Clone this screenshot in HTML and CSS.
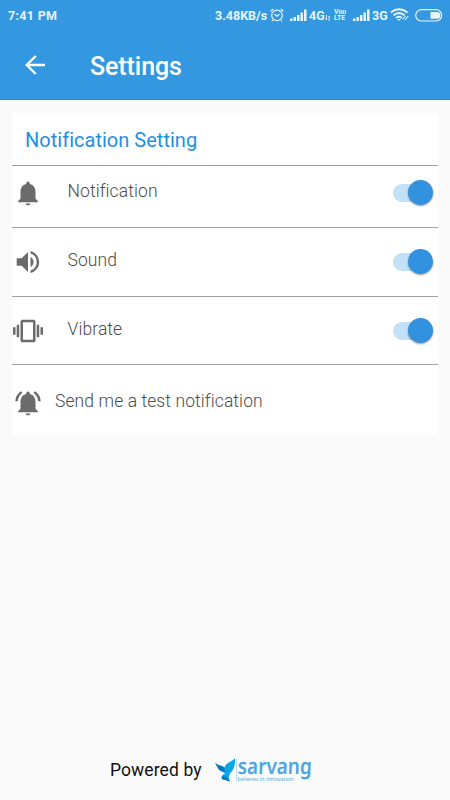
FILE: index.html
```html
<!DOCTYPE html>
<html lang="en">
<head>
<meta charset="utf-8">
<title>Settings</title>
<link rel="stylesheet" href="styles.css">
</head>
<body>
<header class="header">
  <div class="status">
    <span class="time">7:41 PM</span>
    <span class="speed">3.48KB/s</span>
    <svg class="alarm" viewBox="0 0 14 14" fill="none" stroke="currentColor" stroke-width="1.2"><circle cx="7" cy="7.4" r="5.3"/><path d="M.7 3.3 3.2 1M13.3 3.3 10.800 1M4.600 6.300 7 8.200 9.500 6.300M3 12l-1 1.500M11 12l1 1.500"/></svg>
    <svg class="signal" viewBox="0 0 17 12" fill="currentColor"><path d="M0 9.500h2.500V12H0zM3.500 8H6v4H3.500zM7 6h2.500v6H7zM10.500 3.500H13V12h-2.500zM14 .5h2.500V12H14z"/></svg>
    <span class="net">4G</span>
    <svg class="data" viewBox="0 0 6 6" fill="none" stroke="currentColor" stroke-width=".9"><path d="M1.500 0v5M.2 3.700 1.500 5M4 6V1M4 1l1.300 1.300"/></svg>
    <span class="volte"><span>Voıı</span><span>LTE</span></span>
    <svg class="signal signal-second" viewBox="0 0 17 12" fill="currentColor"><path d="M0 9.500h2.500V12H0zM3.500 8H6v4H3.500zM7 6h2.500v6H7zM10.500 3.500H13V12h-2.500zM14 .5h2.500V12H14z"/></svg>
    <span class="net">3G</span>
    <svg class="wifi" viewBox="0 0 20 14" fill="none" stroke="currentColor" stroke-width="1.900"><path d="M.8 4.500Q9 -2 17.500 4.500M3.500 7.300Q9 2.700 14.600 7.300M6.200 10Q9 7.700 11.700 10"/><path d="m7.300 11 1.700 2 1.700-2z" fill="currentColor" stroke="none"/><path d="m12.500 11.500 3-3.500M15 12l3.300-4" stroke-width="1.100"/></svg>
    <svg class="battery" viewBox="0 0 28 13"><rect x=".7" y=".7" width="26" height="11.300" rx="5.650" fill="none" stroke="currentColor" stroke-width="1.200"/><path d="M15.500 3h6.500a3.400 3.400 0 0 1 0 6.800h-6.500z" fill="currentColor"/></svg>
  </div>
  <div class="toolbar">
    <svg class="back" viewBox="0 0 20 20" fill="none" stroke="currentColor" stroke-width="2.400"><path d="M20 10H2M10.800 1 1.700 10l9.100 9"/></svg>
    <h1>Settings</h1>
  </div>
</header>
<main class="card">
  <h2>Notification Setting</h2>
  <div class="row row-first">
    <svg class="icon" viewBox="0 0 30 30" fill="currentColor"><path d="M15 27.300c1.400 0 2.500-.8 2.500-1.800h-5c0 1 1.100 1.800 2.500 1.800zM22.500 20.800v-6.800c0-4-2-7.100-5.700-8V5.200a1.800 1.800 0 0 0-3.600 0V6c-3.700.9-5.700 4-5.700 8v6.800L5 23.200v1.100h20v-1.100z"/></svg>
    <span class="label">Notification</span><span class="switch"></span>
  </div>
  <div class="row">
    <svg class="icon" viewBox="0 0 30 30" fill="currentColor"><path d="M3.700 11.300v7.500h5l6.300 6.300V5l-6.300 6.300zM20.600 15c0-2.200-1.300-4.100-3.100-5v10c1.800-.9 3.100-2.800 3.100-5zM17.500 4v2.600a8.800 8.800 0 0 1 0 16.800V26a11.300 11.300 0 0 0 0-22z"/></svg>
    <span class="label">Sound</span><span class="switch"></span>
  </div>
  <div class="row">
    <svg class="icon" viewBox="0 0 30 30" fill="currentColor"><path d="M0 18.700h2.500v-7.500H0zM3.700 21.200h2.500V8.700H3.700zM27.500 11.200v7.500H30v-7.500zM23.700 21.200h2.500V8.700h-2.500zM20.600 3.700H9.400c-1 0-1.900.8-1.900 1.900v18.800c0 1 .8 1.900 1.900 1.900h11.200c1 0 1.900-.8 1.900-1.900V5.600c0-1-.8-1.900-1.900-1.900zM20 23.800H10V6.200h10z"/></svg>
    <span class="label">Vibrate</span><span class="switch"></span>
  </div>
  <div class="row row-test">
    <svg class="icon" viewBox="0 0 30 30" fill="currentColor"><path d="M15 27.300c1.400 0 2.500-.8 2.500-1.800h-5c0 1 1.100 1.800 2.500 1.800zM22.500 20.800v-6.800c0-4-2-7.100-5.700-8V5.200a1.800 1.800 0 0 0-3.600 0V6c-3.700.9-5.700 4-5.700 8v6.800L5 23.200v1.100h20v-1.100z"/><path d="M9.500 5.100 7.700 3.300a13.600 13.600 0 0 0-5.400 9.900h2.500c.2-3.300 1.900-6.200 4.700-8.100zM25.200 13.200h2.500a13.600 13.600 0 0 0-5.400-9.900l-1.800 1.800c2.700 1.900 4.500 4.800 4.700 8.100z"/></svg>
    <span class="label">Send me a test notification</span>
  </div>
</main>
<footer class="footer">
  <span class="powered">Powered by</span>
  <svg class="logo" viewBox="0 0 98 26">
    <path fill="#0879bd" d="M0 4.500c2 4 3 8 8 9.500 3 1 4 3 4 5 2-5-1-9-5-11C4 7 2 6.500 0 4.500z"/>
    <path fill="#0ba5e9" d="M20 0c-1 2-4 3-7 5-3.500 2.500-5 6-2.500 10l1.200 2C16 15 20.500 12 20 0z"/>
    <path fill="#0ba5e9" d="M15.500 15.500c-4-1-8.500 0-9 3.500 0 2 1.500 3 4 3l4.500 1.500c-1.500-3.500-2-5 .5-8z"/>
    <path fill="#0879bd" d="M6.500 19c0 2 1.500 3 4 3l4.500 1.500c-1-2-2-4.500-4-4.800-1.500-.3-3-.2-4.500.3z"/>
    <path stroke="#a6d3ef" stroke-width=".8" d="M21.500 1v22"/>
    <text class="brand" transform="translate(22.500 15.500) skewX(-2)" textLength="74" lengthAdjust="spacingAndGlyphs">sarvang</text>
    <text class="tagline" x="22.500" y="22.500" textLength="56" lengthAdjust="spacingAndGlyphs">believes in innovation</text>
  </svg>
</footer>
</body>
</html>
```

FILE: styles.css
```css
* { box-sizing: border-box; }
body {
  margin: 0;
  height: 800px;
  display: flex;
  flex-direction: column;
  overflow: hidden;
  background: #fafafa;
  font-family: Roboto, sans-serif;
}
svg { display: block; flex: none; }
.header {
  height: 100px;
  background: #3498e1;
  border-bottom: 1px solid #1c87d5;
  color: #fff;
}
.status {
  height: 30px;
  display: flex;
  align-items: center;
  padding-left: 8px;
  color: #e9f5fd;
  font-size: 12.500px;
  font-weight: 700;
  white-space: nowrap;
}
.time { width: 207px; letter-spacing: .3px; }
.speed { width: 55px; letter-spacing: 0; }
.alarm { width: 14px; height: 14px; margin-right: 6px; }
.signal { width: 17px; height: 12px; margin-right: 2px; }
.net { width: 16px; }
.data { width: 6px; height: 6px; margin: 5px 3px 0 0; }
.volte {
  width: 16px;
  display: flex;
  flex-direction: column;
  font-size: 7px;
  line-height: 6.500px;
}
.signal-second { margin: 0 2px 0 3px; }
.wifi { width: 20px; height: 14px; margin-left: 2px; }
.battery { width: 28px; height: 13px; margin-left: 5px; }
.toolbar { height: 69px; display: flex; align-items: center; padding-left: 25px; }
.back { width: 20px; height: 20px; }
h1 { margin: 4px 0 0 45px; font-size: 25px; line-height: 30px; font-weight: 500; letter-spacing: -.08px; }
.card {
  width: 426px;
  height: 322px;
  margin: 12.500px 0 0 12px;
  border-radius: 3px;
  background: #fff;
  color: #6b6b6b;
}
h2 {
  height: 52px;
  margin: 0;
  padding: 2px 0 0 13px;
  font-size: 20px;
  line-height: 50px;
  font-weight: 400;
  letter-spacing: .02px;
  color: #1e90df;
}
.row {
  height: 68.700px;
  display: flex;
  align-items: center;
  border-top: 1px solid #a1a1a1;
  font-size: 17.500px;
}
.row-first { height: 62.500px; padding-bottom: 6px; }
.icon { width: 30px; height: 30px; margin-left: .7px; }
.label { margin: -3px 0 0 24.800px; font-weight: 300; color: #4c4c4c; letter-spacing: .1px; }
.row-first .label { margin-top: -4px; }
.row-test { padding-top: 7px; }
.row-test .label { margin: -3px 0 0 12.300px; }
.switch {
  width: 36px;
  height: 18px;
  margin: 0 9px 0 auto;
  border-radius: 9px;
  background: #c2e0f6;
}
.switch::after {
  content: "";
  display: block;
  width: 25px;
  height: 25px;
  margin: -4px 0 0 15px;
  border-radius: 50%;
  background: #3292df;
  box-shadow: 0 1px 2px rgba(0, 0, 0, .4);
}
.footer {
  display: flex;
  align-items: center;
  margin-top: auto;
  height: 60px;
  padding-left: 110px;
}
.powered { width: 105px; font-size: 17.500px; letter-spacing: .1px; color: #111; }
.logo { width: 98px; height: 26px; margin-top: 2px; overflow: visible; }
.brand { font: 600 22px "Noto Sans", sans-serif; fill: #4da6df; }
.tagline { font: 6px "Open Sans", sans-serif; fill: #4da6df; }
```
